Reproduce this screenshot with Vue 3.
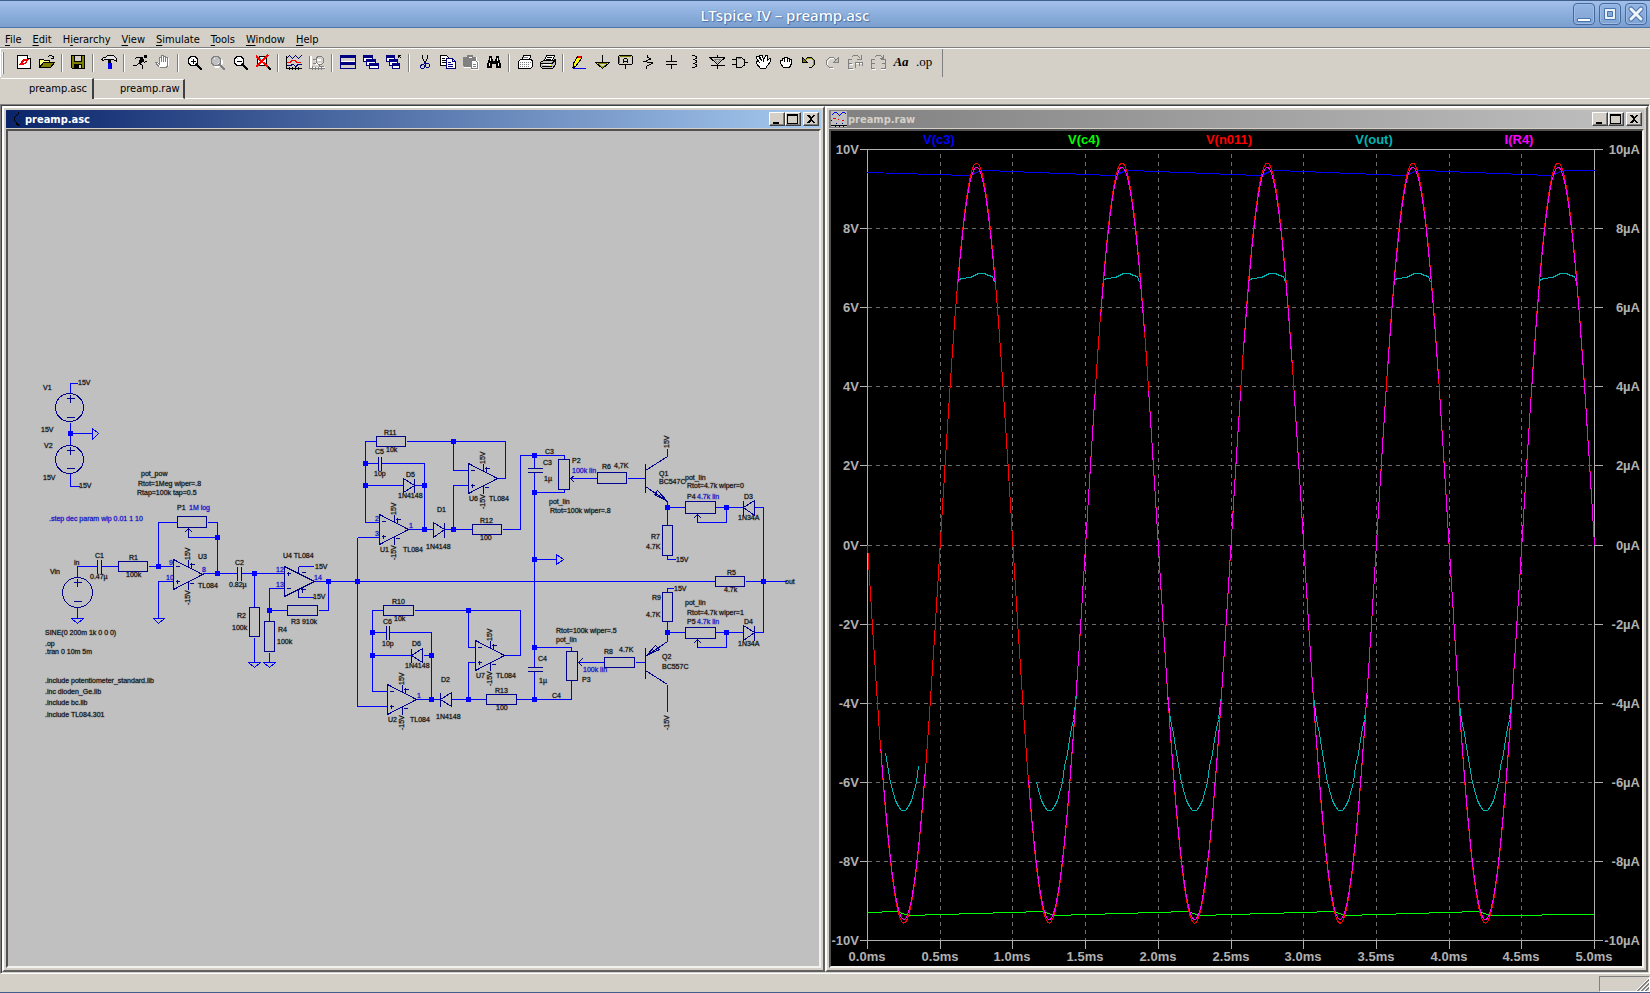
<script setup>
const menus = ['File', 'Edit', 'Hierarchy', 'View', 'Simulate', 'Tools', 'Window', 'Help']

const Z = 'M11 10L15 14V15H14L10 11Z'
const lens = 'M5 2.5H9L11.5 5V9L9 11.5H5L2.5 9V5Z'
const g = '#808080'
const w = '#ffffff'
const k = '#000000'
const n = '#000080'
// Each shape is [path, stroke, fill, stroke width]
const tools = [
  { name: 'New Schematic', s: [['M1.5 1.5H11.5L14.5 4.5V14.5H1.5Z', k, w], ['M11.5 1.5V4.5H14.5', k, w], ['M3 11L7 5H9L7 9H9L8 11Z', 'none', '#f00000'], ['M8 5H13L10 10H8L10 7H8Z', 'none', '#f00000']] },
  { name: 'Open', s: [['M.5 13.5V5.5H4.5L5.5 6.5H10.5V8.5', k, '#ffff80'], ['M.5 13.5L4.5 8.5H15.5L11.5 13.5Z', k, '#808000'], ['M8.5 3.5L10.5 1.5H12.5L14.5 3.5M14.5 1.5V4.5H11.5', k, 'none']] },
  null,
  { name: 'Save', s: [['M1.5 1.5H14.5V14.5H2.5L1.5 13.5Z', k, '#808000'], ['M4.5 1.5H11.5V7.5H4.5Z', k, '#d4d0c8'], ['M4 10H12V15H4Z', 'none', k], ['M9 11H11V14H9Z', 'none', '#d4d0c8']] },
  null,
  { name: 'Control Panel', s: [['M.5 5.5L2.5 3.5H4.5L6.5 1.5H12.5L15.5 4.5V7.5L12.5 5.5H3.5L2.5 6.5Z', k, '#e4e4e4'], ['M7 6H10V9H7Z', 'none', k], ['M7 9H10V15H7Z', 'none', '#0000ff'], ['M10.5 9V15', n, 'none']] },
  null,
  { name: 'Run', s: [['M12 1H15V4H12Z', 'none', k], ['M7 3H11L12 6L9 10H6L8 5Z', 'none', k], ['M7.500 3.500H4.500L2.500 5.500M10.500 6.500L12.500 8.500L15.500 6.500M7.500 9.500L10.500 11.500V14.500M6.500 9.500L4.500 11.500H.500', k, 'none']] },
  { name: 'Halt', s: [['M5 14L1 9V8H3L5 10V3H6V2H8V1H9V2H11V3H12V4H14V11L12 14Z', 'none', w], ['M4.500 13.500L.500 8.500H2.500L4.500 10.500V3.500H5.500M6.500 8V1.500H8.500V8M8.500 2.500H10.500V8M10.500 3.500H12.500V11.500L11.500 13.500H4.500', g, 'none']] },
  null,
  { name: 'Zoom in', s: [[lens, k, w], ['M4 5L6 3V5ZM8 10L10 8V10Z', 'none', '#00ffff'], ['M4.500 7H9.500M7 4.500V9.500', k, 'none'], [Z, k, k]] },
  { name: 'Pan', s: [['M6 3.500H10L12.500 6V10L10 12.500H6L3.500 10V6ZM12 12L16 16', w, 'none', 2], [lens, g, '#c0c0c0'], ['M4 5L6 3V5ZM8 10L10 8V10Z', 'none', w], [Z, g, g]] },
  { name: 'Zoom out', s: [[lens, k, w], ['M4 5L6 3V5ZM8 10L10 8V10Z', 'none', '#00ffff'], ['M4.500 7H9.500', k, 'none'], [Z, k, k]] },
  { name: 'Zoom full extents', s: [[lens, k, w], ['M4 5L6 3V5ZM8 10L10 8V10Z', 'none', '#00ffff'], [Z, k, k], ['M1 2L13 13M13 1L1 13', '#ff0000', 'none', 2]] },
  null,
  { name: 'Autorange', s: [['M.500 4.500L3.500 1.500L6.500 4.500L9.500 1.500L12.500 4.500L15.500 1.500', n, 'none'], ['M1 8.500H4L6 6.500H9L11 8.500H15', '#ff0000', 'none'], ['M1 11.500H4L7 10.500L10 12.500L12 10.500H16', n, 'none'], ['M.500 2V14.500H16M3.500 13V16M6.500 13V16M9.500 13V16M12.500 13V16', k, 'none']] },
  { name: 'Pick Visible Traces', s: [['M1.500 1.500V13.500H16M6 5.500H12M6 9.500H12', w, 'none', 2], ['M.500 1.500V14.500H16M3.500 12V16M6.500 13V16M9.500 13V16M12.500 13V16M4 5.500H7L8.500 3.500M4 9.500H7', g, 'none'], ['M8.500 2.500H12.500L14.500 4.500V8.500L12.500 10.500H9.500L7.500 8.500V3.500ZM10.500 10.500V12.500H15', g, 'none']] },
  null,
  { name: 'Tile', s: [['M.500 1.500H15.500V14.500H.500Z', n, w], ['M0 1H16V4H0ZM0 8H16V11H0Z', 'none', n], ['M1 5.500H15M1 12.500H15', '#d4d0c8', 'none', 3]] },
  { name: 'Cascade', s: [['M.500 1.500H9.500V7.500H.500Z', n, w], ['M0 1H10V4H0Z', 'none', n], ['M3.500 5.500H12.500V11.500H3.500Z', n, w], ['M3 5H13V8H3Z', 'none', n], ['M6.500 9.500H15.500V14.500H6.500Z', n, w], ['M6 9H16V12H6Z', 'none', n]] },
  { name: 'Close all', s: [['M.500 1.500H8.500V7.500H.500Z', n, w], ['M0 1H9V4H0Z', 'none', n], ['M3.500 5.500H11.500V11.500H3.500Z', n, w], ['M3 5H12V8H3Z', 'none', n], ['M6.500 9.500H13.500V14.500H6.500Z', n, w], ['M6 9H14V12H6Z', 'none', n], ['M12.500 4V1.500H15M12.500 1.500L15.500 4.500', k, 'none']] },
  null,
  { name: 'Cut', s: [['M5.500 1V4.500L8.500 9M10.500 1V4.500L7.500 9', k, 'none'], ['M5 10.500H6.500L7.500 12V13.500L6.500 14.500H4.500L3.500 13.500V12ZM9.500 9.500H11.500L12.500 11V12.500L11.500 13.500H9.500L8.500 12V11Z', n, 'none'], ['M7.500 8V10', n, 'none', 2]] },
  { name: 'Copy', s: [['M.500 1.500H6.500L9.500 4.500V11.500H.500Z', k, w], ['M2 4.500H5M2 6.500H7M2 8.500H7', k, 'none'], ['M6.500 4.500H12.500L15.500 7.500V14.500H6.500Z', n, w], ['M12.500 5V7.500H15M8 8.500H11M8 10.500H13M8 12.500H13', n, 'none']] },
  { name: 'Paste', s: [['M1 3H5V1H10V3H14V7H16V16H8V14H1Z', 'none', w], ['M0 3H4V1H10V3H13V6H8V13H1L0 12Z', 'none', g], ['M5.500 3.500H9', w, 'none'], ['M8.500 6.500H12.500L14.500 8.500V14.500H8.500ZM10 10.500H13M10 12.500H13', g, w]] },
  { name: 'Find', s: [['M3 2H6V5H7V7H9V5H10V2H13V5L15 10V14H10V10H6V14H1V10L3 5Z', 'none', k], ['M4.500 4V7M3.500 9V12M11.500 4V7M12.500 9V12', w, 'none']] },
  null,
  { name: 'Print preview', s: [['M4.500 6.500L6.500 1.500H13.500L12.500 6.500Z', k, w], ['M1.500 7.500L3.500 5.500H14.500L15.500 7.500V12.500L13.500 14.500H1.500Z', k, w], ['M3 8.500H14M3 10.500H13M3 12.500H13', g, 'none', 1, '1 1'], ['M6 3.500H11', g, 'none']] },
  { name: 'Print', s: [['M4.500 6.500L6.500 1.500H14.500L12.500 6.500Z', k, w], ['M.500 8.500L3.500 6.500H13.500L15.500 5.500V10.500L12.500 14.500H2.500L.500 12.500Z', k, '#c0c0c0'], ['M7 3.500H12M6 5.500H11M1 9.500H12L15 6.500M2 12.500H12', k, 'none'], ['M3 10.500H11', w, 'none'], ['M9 11.500H11', '#ffff00', 'none']] },
  null,
  { name: 'Wire', s: [['M2 14V10L7 2H10V5L5 12Z', k, '#ffff00'], ['M7 2H10V4H7Z', 'none', '#ff0000'], ['M1 13H4L2 15Z', 'none', k], ['M2 14.500H15', '#0000ff', 'none']] },
  { name: 'Ground', s: [['M8.500 1V8', k, 'none'], ['M1.500 8.500H15.500L8.500 14.500Z', k, 'none'], ['M4 9.500H13', '#808000', 'none'], ['M5.500 10.500L8.500 13L11.500 10.500', '#a0a000', 'none']] },
  { name: 'Label Net', s: [['M2.500 1.500H14.500L15.500 2.500V9.500L14.500 10.500H2.500L1.500 9.500V2.500Z', k, 'none'], ['M3 2.500H14M2.500 3V9', '#808000', 'none'], ['M6.500 9V5.500L7.500 4.500H9.500L10.500 5.500V9M7 7.500H10M8.500 11V15', k, 'none']] },
  { name: 'Resistor', s: [['M7.500 1V3L10.500 5L4.500 7.500L12.500 9L6.500 12.500V15', k, 'none']] },
  { name: 'Capacitor', s: [['M8.500 1V7M3 7.500H14M3 10.500H14M8.500 11V15', k, 'none']] },
  { name: 'Inductor', s: [['M5.500 1.500H8.500L10.500 3V4L8.500 5.500H6.500H8.500L10.500 7V8L8.500 9.500H6.500H8.500L10.500 11V12L8.500 13.500H5.500', k, 'none']] },
  { name: 'Diode', s: [['M8.500 1V3M8.500 11V15M1.500 11.500H15.500M1 3.500H16L8.500 10.500Z', k, 'none'], ['M5.500 5.500H11.500L8.500 8.500Z', g, 'none']] },
  { name: 'Component', s: [['M4.500 3.500H9.500L12.500 6V11L9.500 13.500H4.500ZM0 5.500H4M0 10.500H4M13 8.500H16', k, 'none'], ['M5.500 4.500H9', g, 'none']] },
  { name: 'Move', s: [['M5.500 14.500L1.500 9.500V7.500H3.500L4.500 8.500L1.500 4.500V2.500H3.500L6.500 6.500L4.500 2.500V1.500H7.500L8.500 6.500L10.500 1.500H12.500V6.500L14.500 4.500H15.500V7.500L12.500 11.500L10.500 14.500Z', k, w]] },
  { name: 'Drag', s: [['M5.500 13.500L2.500 9.500V6.500H4.500V4.500H6.500V3.500H9.500V4.500H11.500V5.500H13.500V9.500L11.500 13.500Z', k, w], ['M6.500 5V8M9.500 5V8M11.500 6V8', k, 'none']] },
  { name: 'Undo', s: [['M3.500 6.500L6.500 4.500H10.500L12.500 6.500V10.500L10.500 12.500', '#a0a000', 'none'], ['M4.500 5.500L6.500 3.500H10.500L13.500 6.500V10.500L10.500 13.500H8', k, 'none'], ['M1.500 3.500V8.500H6.500Z', k, '#808000']] },
  { name: 'Redo', s: [['M13 7.500L10.500 4.500H6.500L3.500 7.500V11.500L6.500 14.500H10', w, 'none'], ['M12 6.500L9.500 3.500H5.500L2.500 6.500V10.500L5.500 13.500H9', g, 'none'], ['M14.500 3.500V8.500H9.500Z', g, '#c0c0c0']] },
  { name: 'Rotate', s: [['M2 15.500H7M3 10.500H6M9 9.500H16', w, 'none'], ['M1.500 5V14.500H6M1.500 9.500H5M1.500 5.500H5', g, 'none', 1], ['M8.500 14V8.500H16M12.500 9V12M15.500 9V12', g, 'none', 1], ['M4.500 3.500L6.500 1.500H10.500L13.500 4.500M14.500 1V5.500H10', g, 'none']] },
  { name: 'Mirror', s: [['M2 15.500H6M11 15.500H17', w, 'none'], ['M1.500 5V14.500H5M1.500 9.500H5M1.500 5.500H5M15.500 5V14.500H11M15.500 9.500H12M15.500 5.500H11', g, 'none'], ['M4.500 3.500L6.500 1.500H10.500L13.500 4.500M13.500 1V4.500H10', g, 'none']] },
  { name: 'Text', text: 'Aa' },
  { name: 'SPICE Directive', text: '.op' },
]

// ---- schematic ----
const wires = [
  'M77 383H70V393M70 422V444M70 433H92M70 473V486H79',
  'M77 577V566H97M101 566H118M148 566H173M177 522H158V566M207 522H217V573M188 537H217',
  'M173 581H158V618M77 607V618M202 573H237M241 573H284M254 573V607M254 637V662M284 588H269V621M269 652V662',
  'M269 610H287M318 610H328V581M314 581H715M298 566H313M298 597H313',
  'M357 537V706M357 537H379M357 706H387',
  'M376 441H365V522H379M406 441H505V478H497M453 441V470H468M468 485H453V529',
  'M365 463H378M381 463H424V529M365 485H403M414 485H424M409 529H433M444 529H472M502 529H520V455H564V459',
  'M534 455V468M534 472V667M534 671V699M564 489V492H534M534 559H556M534 647H571V651M571 680V699H516M486 699H451',
  'M383 610H372V691H387M414 610H520V655H505M468 610V647H475M475 662H468V699',
  'M372 632H386M389 632H431V699M372 655H412M423 655H431M417 699H440',
  'M570 478H597M627 478H645M667 456V448M667 501V525M667 555V559H675M667 507H685M715 507H743M726 507V522H697M754 507H763V632H754M763 581H786M745 581H763',
  'M577 662H604M635 662H645M667 684V711M667 641V621M667 592V588H673M667 632H685M715 632H743M726 632V647H697',
].join('')

const nodes = [[70, 433], [158, 566], [217, 537], [217, 573], [254, 573], [269, 610], [328, 581], [357, 581], [365, 463], [365, 485], [424, 485], [424, 529], [453, 441], [453, 529], [534, 455], [534, 492], [534, 559], [534, 647], [534, 699], [372, 632], [372, 655], [431, 655], [431, 699], [468, 610], [468, 699], [667, 507], [726, 507], [763, 581], [667, 632], [726, 632]]

// Resistor and potentiometer bodies: x, y, width, height
const boxes = [[177, 516, 29, 11], [118, 561, 29, 10], [249, 607, 10, 29], [264, 621, 10, 30], [287, 605, 30, 10], [376, 436, 29, 10], [472, 524, 29, 10], [558, 459, 11, 30], [597, 472, 29, 11], [662, 525, 10, 30], [685, 501, 30, 12], [715, 576, 29, 10], [662, 592, 10, 29], [685, 627, 30, 11], [604, 657, 30, 10], [566, 651, 11, 29], [486, 694, 30, 10], [383, 605, 30, 10]]

const sources = [[69, 407, 14], [69, 459, 14], [77, 592, 15]]
const plusAt = (x, y) => `M${x - 4} ${y}H${x + 4}M${x} ${y - 4}V${y + 4}`
const minusAt = (x, y) => `M${x - 4} ${y}H${x + 4}`
const sourceMarks = [plusAt(70, 398), minusAt(70, 417), plusAt(70, 450), minusAt(70, 468), plusAt(77, 582), minusAt(77, 601)].join('')

const opamps = [[173, 559], [379, 514], [468, 463], [475, 640], [387, 684]]
const opampPath = ([x, y]) =>
  `M${x} ${y}V${y + 30}L${x + 29} ${y + 15}ZM${x + 15} ${y}V${y + 8}M${x + 15} ${y + 22}V${y + 30}` +
  `M${x + 2} ${y + 7}H${x + 6}M${x + 2} ${y + 22}H${x + 6}M${x + 4} ${y + 20}V${y + 24}` +
  `M${x + 16} ${y + 5}H${x + 21}M${x + 18} ${y + 3}V${y + 8}M${x + 16} ${y + 24}H${x + 20}`
const supplies = opamps.flatMap(([x, y]) => [[x + 17, y + 1, '15V'], [x + 17, y + 46, '-15V']])
supplies.push([669, 448, '15V'], [669, 730, '-15V'])

const symbols = [
  // U4
  'M284 566V596L314 581ZM298 566V573M298 589V597M286 573H290M288 571V575M286 588H290M301 572H305M300 589H305M302 587V592',
  // capacitors
  'M97 559V573M101 559V573M237 566V580M241 566V580M378 456V470M381 456V470M386 625V639M389 625V639M527 468H542M527 472H542M527 667H542M527 671H542',
  // diodes
  'M403 478V492L414 485ZM414 478V492M433 522V537L444 529ZM444 522V537M422 648V662L411 655ZM411 648V662M451 692V706L440 699ZM440 692V706M754 500V515L743 507ZM743 500V515M743 625V640L754 632ZM754 625V640',
  // transistors
  'M645 463V492M645 470L667 456M645 486L667 501M654 494L657 490L667 501ZM645 647V678M645 656L667 641M645 670L667 684M646 655L655 645L659 649Z',
  // wipers
  'M184 532L188 528L192 532M188 528V537M574 475L570 478L574 482M582 658L578 662L582 666M693 518L697 514L701 518M697 514V522M693 643L697 639L701 643M697 639V647',
].join('')

const grounds = 'M92 428V439L98 433ZM556 554V564L563 559ZM153 618H164L158 623ZM71 618H83L77 623ZM248 662H260L254 667ZM263 662H275L269 667Z'

const labels = [
  [43, 390, 'V1'], [78, 385, '15V'], [41, 432, '15V'], [44, 448, 'V2'], [43, 480, '15V'], [79, 488, '15V'],
  [141, 476, 'pot_pow'], [138, 486, 'Rtot=1Meg wiper=.8'], [137, 495, 'Rtap=100k tap=0.5'], [177, 510, 'P1'],
  [95, 558, 'C1'], [90, 579, '0.47µ'], [129, 560, 'R1'], [126, 577, '100k'], [74, 565, 'in'], [50, 574, 'Vin'],
  [198, 559, 'U3'], [198, 588, 'TL084'], [235, 565, 'C2'], [229, 587, '0.82µ'], [237, 618, 'R2'], [232, 630, '100k'],
  [278, 632, 'R4'], [277, 644, '100k'], [291, 624, 'R3 910k'], [283, 558, 'U4 TL084'], [315, 569, '15V'], [313, 599, '15V'],
  [45, 635, 'SINE(0 200m 1k 0 0 0)'], [45, 646, '.op'], [45, 654, '.tran 0 10m 5m'], [45, 683, '.include potentiometer_standard.lib'],
  [45, 694, '.inc dioden_Ge.lib'], [45, 705, '.include bc.lib'], [45, 717, '.include TL084.301'],
  [384, 435, 'R11'], [386, 452, '10k'], [375, 454, 'C5'], [374, 476, '10p'], [406, 477, 'D5'], [398, 498, '1N4148'],
  [380, 552, 'U1'], [403, 552, 'TL084'], [426, 549, '1N4148'], [437, 512, 'D1'], [480, 523, 'R12'], [480, 540, '100'],
  [469, 501, 'U6'], [489, 501, 'TL084'], [545, 454, 'C3'], [543, 465, 'C3'], [544, 481, '1µ'], [572, 463, 'P2'],
  [549, 504, 'pot_lin'], [550, 513, 'Rtot=100k wiper=.8'], [392, 604, 'R10'], [394, 621, '10k'], [383, 624, 'C6'], [382, 646, '10p'],
  [412, 646, 'D6'], [405, 668, '1N4148'], [441, 682, 'D2'], [436, 719, '1N4148'], [388, 722, 'U2'], [410, 722, 'TL084'],
  [476, 678, 'U7'], [496, 678, 'TL084'], [495, 693, 'R13'], [496, 710, '100'], [538, 661, 'C4'], [539, 683, '1µ'], [552, 698, 'C4'],
  [556, 633, 'Rtot=100k wiper=.5'], [556, 642, 'pot_lin'], [582, 682, 'P3'], [602, 469, 'R6'], [614, 468, '4,7K'],
  [659, 476, 'Q1'], [659, 484, 'BC547C'], [685, 480, 'pot_lin'], [687, 488, 'Rtot=4.7k wiper=0'], [687, 499, 'P4'], [744, 499, 'D3'],
  [738, 520, '1N34A'], [651, 539, 'R7'], [646, 549, '4.7K'], [676, 562, '15V'], [727, 575, 'R5'], [724, 592, '4.7k'], [785, 584, 'out'],
  [652, 600, 'R9'], [646, 617, '4.7K'], [674, 591, '15V'], [685, 605, 'pot_lin'], [687, 615, 'Rtot=4.7k wiper=1'], [687, 624, 'P5'],
  [744, 624, 'D4'], [738, 646, '1N34A'], [662, 659, 'Q2'], [662, 669, 'BC557C'], [604, 654, 'R8'], [619, 652, '4.7K'],
]
const blueLabels = [
  [189, 510, '1M log'], [49, 521, '.step dec param wip 0.01 1 10'], [169, 565, '9'], [166, 580, '10'], [202, 572, '8'],
  [276, 572, '12'], [276, 587, '13'], [314, 580, '14'], [375, 521, '2'], [375, 536, '3'], [409, 528, '1'], [417, 698, '1'],
  [572, 473, '100k lin'], [583, 672, '100k lin'], [697, 499, '4.7k lin'], [697, 624, '4.7k lin'],
]

// ---- waveform plot ----
const left = 867
const right = 1594
const top = 149
const bottom = 940
const perMs = (right - left) / 5
const px = (t) => left + t * perMs
const py = (v) => (top + bottom) / 2 - (v * (bottom - top)) / 20

const rows = Array.from({ length: 11 }, (_, i) => ({ y: Math.round(py(10 - 2 * i)), v: 10 - 2 * i }))
const cols = Array.from({ length: 11 }, (_, i) => ({ x: Math.round(px(i / 2)), t: (i / 2).toFixed(1) }))
const gridLines =
  rows.slice(1, -1).map((r) => `M${left} ${r.y}H${right}`).join('') +
  cols.slice(1, -1).map((c) => `M${c.x} ${top + 4}V${bottom}`).join('')
const axes =
  `M${left} ${top}V${bottom + 8}M${right} ${top}V${bottom + 8}M${left} ${top}H${right}M${left} ${bottom}H${right}` +
  rows.map((r) => `M${left - 8} ${r.y}H${left}M${right} ${r.y}H${right + 8}`).join('') +
  cols.map((c) => `M${c.x} ${bottom}V${bottom + 8}`).join('')

const sine = (from, to, hi, lo) => {
  const pts = []
  const steps = Math.max(2, Math.round((to - from) * 150))
  for (let i = 0; i <= steps; i++) {
    const t = from + ((to - from) * i) / steps
    const s = -Math.sin(2 * Math.PI * t)
    pts.push(`${px(t).toFixed(1)} ${py(s > 0 ? s * hi : s * lo).toFixed(1)}`)
  }
  return 'M' + pts.join('L')
}
const redTrace = sine(0, 5, 9.66, 9.56)
// Time at which the curve reaches v, measured from the peak or trough
const half = (v) => Math.acos(Math.abs(v) / 9.57) / (2 * Math.PI)
const spans = [
  [0.25 - half(5.2), 0.25 + half(5.6)],
  [0.75 - half(6.6), 0.75 + half(6.6)],
  [1.25 - half(6), 1.75 - half(3.9)],
  [1.75 - half(5.8), 1.75 + half(5.4)],
  [1.75 + half(3.9), 2.75 - half(3.9)],
  [2.75 - half(4.9), 2.75 + half(4.6)],
  [2.75 + half(3.9), 3.75 - half(3.9)],
  [3.75 - half(4.3), 3.75 + half(4.2)],
  [3.75 + half(3.9), 5],
]
const magentaTrace = spans.map(([a, b]) => sine(a, b, 9.55, 9.47)).join('')

const peaks = [0.75, 1.75, 2.75, 3.75, 4.75].map((t) => Math.round(px(t)))
const troughs = [0.25, 1.25, 2.25, 3.25, 4.25].map((t) => Math.round(px(t)))
const crown = [[-18, 280], [-18, 279], [-14, 278], [-6, 277], [-2, 275], [2, 273], [8, 273], [12, 275], [16, 276], [18, 282]]
const bowl = [[-27, 695], [-24, 719], [-21, 733], [-18, 753], [-13, 782], [-8, 800], [-5, 806], [-2, 810], [2, 810], [5, 806], [8, 800], [13, 782], [15, 766], [18, 753], [21, 733], [24, 719], [27, 695]]
const line = (pts) => 'M' + pts.map((p) => p.join(' ')).join('L')
const cyanTrace =
  peaks.map((c) => line(crown.map(([x, y]) => [c + x, y]))).join('') +
  troughs
    .map((c, i) => {
      const pts = i === 0 ? bowl.slice(3, 13) : i === 1 ? bowl.slice(4) : bowl
      return line(pts.map(([x, y]) => [c + x, y]))
    })
    .join('')

const blueTrace = line([[left, 172], ...peaks.flatMap((c) => [[c - 9, 175], [c - 4, 174], [c + 2, 171], [c + 9, 170]]), [right, 170]])
const greenTrace = line([[left, 912], ...troughs.flatMap((c) => [[c - 6, 911], [c - 1, 913], [c + 5, 915]]), [right, 914]])

const legend = [
  { t: 'V(c3)', x: 939, c: '#0000ff' },
  { t: 'V(c4)', x: 1084, c: '#00ff00' },
  { t: 'V(n011)', x: 1229, c: '#ff0000' },
  { t: 'V(out)', x: 1374, c: '#00b4b4' },
  { t: 'I(R4)', x: 1519, c: '#ff00ff' },
]
</script>

<template>
  <div class="app">
    <header class="frame-title">
      <h1>LTspice IV – preamp.asc</h1>
      <div class="frame-buttons">
        <button aria-label="Minimize"><svg viewBox="0 0 20 20"><path d="M3.500 14.500H16.500V17.500H3.500Z" fill="#fff" stroke="#4a74ac" /></svg></button>
        <button aria-label="Maximize"><svg viewBox="0 0 20 20"><path d="M4.500 4.500H15.500V15.500H4.500Z" fill="#e8f0fa" stroke="#4a74ac" /><path d="M7.500 7.500H12.500V12.500H7.500Z" fill="#86a9d8" stroke="#4a74ac" /></svg></button>
        <button aria-label="Close"><svg viewBox="0 0 20 20"><path d="M5 5L15 15M15 5L5 15" stroke="#4a74ac" stroke-width="5" stroke-linecap="round" /><path d="M5 5L15 15M15 5L5 15" stroke="#f0f5fc" stroke-width="3" stroke-linecap="round" /></svg></button>
      </div>
    </header>

    <nav class="menubar">
      <button v-for="m in menus" :key="m"><template v-if="m === 'Hierarchy'">H<u>i</u>erarchy</template><template v-else><u>{{ m[0] }}</u>{{ m.slice(1) }}</template></button>
    </nav>

    <div class="toolbar" role="toolbar">
      <span class="grip"></span>
      <template v-for="(t, i) in tools" :key="i">
        <span v-if="!t" class="sep"></span>
        <button v-else :aria-label="t.name">
          <svg v-if="t.s" viewBox="0 0 16 16">
            <path v-for="(p, j) in t.s" :key="j" :d="p[0]" :stroke="p[1]" :fill="p[2]" :stroke-width="p[3] || 1" :stroke-dasharray="p[4]" />
          </svg>
          <span v-else :class="['glyph', t.text === 'Aa' ? 'italic' : 'plain']">{{ t.text }}</span>
        </button>
      </template>
      <span class="toolbar-end"></span>
    </div>

    <div class="tabs" role="tablist">
      <button role="tab" aria-selected="true" class="tab active">preamp.asc</button>
      <button role="tab" aria-selected="false" class="tab">preamp.raw</button>
    </div>

    <main class="mdi">
      <section class="child">
        <header class="caption active">
          <svg class="doc" viewBox="0 0 16 16"><path d="M10.500 1V2.500L6.500 6.500V9.500L8.500 11.500M8.500 11V14M9 12.500L11.500 15" fill="none" stroke="#000" /></svg>
          <h2>preamp.asc</h2>
          <button aria-label="Minimize"><svg viewBox="0 0 12 10"><path d="M2 8H8V10H2Z" /></svg></button>
          <button aria-label="Maximize"><svg viewBox="0 0 12 10"><path d="M0 0H11V10H0ZM1 2V9H10V2Z" fill-rule="evenodd" /></svg></button>
          <button class="close" aria-label="Close"><svg viewBox="0 0 12 10"><path d="M2 1H4L6 3L8 1H10L7 5L10 9H8L6 7L4 9H2L5 5Z" /></svg></button>
        </header>
        <div class="client sheet">
          <svg viewBox="8 131 811 835" class="canvas">
            <g fill="none" shape-rendering="crispEdges" transform="translate(0.5 0.5)">
              <path :d="wires" stroke="#0000ff" />
              <path :d="grounds" stroke="#0000ff" />
              <path :d="symbols + sourceMarks" stroke="#000090" />
              <path v-for="(o, i) in opamps" :key="i" :d="opampPath(o)" stroke="#000090" />
              <circle v-for="(s, i) in sources" :key="i" :cx="s[0]" :cy="s[1]" :r="s[2]" stroke="#000090" />
              <rect v-for="(b, i) in boxes" :key="i" :x="b[0]" :y="b[1]" :width="b[2]" :height="b[3]" stroke="#000090" fill="#c0c0c0" />
            </g>
            <g fill="#0000ff" shape-rendering="crispEdges">
              <rect v-for="(p, i) in nodes" :key="i" :x="p[0] - 2" :y="p[1] - 2" width="5" height="5" />
            </g>
            <g class="net">
              <text v-for="(l, i) in labels" :key="i" :x="l[0]" :y="l[1]">{{ l[2] }}</text>
              <text v-for="(l, i) in supplies" :key="i" :transform="`translate(${l[0]} ${l[1]}) rotate(-90)`">{{ l[2] }}</text>
            </g>
            <g class="net blue">
              <text v-for="(l, i) in blueLabels" :key="i" :x="l[0]" :y="l[1]">{{ l[2] }}</text>
            </g>
          </svg>
        </div>
      </section>

      <section class="child">
        <header class="caption">
          <svg class="doc" viewBox="0 0 16 16"><path d="M0 0H16V16H0Z" fill="#c0c0c0" /><path d="M.500 4.500L3.500 1.500H5.500L8.500 4.500L11.500 1.500H13.500L15.500 3.500" fill="none" stroke="#0000ff" /><path d="M2 7.500H5M7 8.500H8M11 9.500H13" stroke="#ff0000" /><path d="M5 12.500H6M11 12.500H12" stroke="#000080" /><path d="M0 14.500H16M.500 9V10M4.500 15V16M8.500 15V16M12.500 15V16" stroke="#000" /></svg>
          <h2>preamp.raw</h2>
          <button aria-label="Minimize"><svg viewBox="0 0 12 10"><path d="M2 8H8V10H2Z" /></svg></button>
          <button aria-label="Maximize"><svg viewBox="0 0 12 10"><path d="M0 0H11V10H0ZM1 2V9H10V2Z" fill-rule="evenodd" /></svg></button>
          <button class="close" aria-label="Close"><svg viewBox="0 0 12 10"><path d="M2 1H4L6 3L8 1H10L7 5L10 9H8L6 7L4 9H2L5 5Z" /></svg></button>
        </header>
        <div class="client plot">
          <svg viewBox="831 131 811 835" class="canvas">
            <g fill="none" shape-rendering="crispEdges" transform="translate(0.5 0.5)">
              <path :d="gridLines" stroke="#6c6c6c" stroke-dasharray="4 4" />
              <path :d="axes" stroke="#b0b0b0" />
              <path :d="blueTrace" stroke="#0000ff" />
              <path :d="greenTrace" stroke="#00ff00" />
              <path :d="redTrace" stroke="#ff0000" />
              <path :d="cyanTrace" stroke="#00b4b4" />
              <path :d="magentaTrace" stroke="#ff00ff" />
            </g>
            <g class="axis">
              <text v-for="r in rows" :key="r.v" x="859" :y="r.y + 5" text-anchor="end">{{ r.v }}V</text>
              <text v-for="r in rows" :key="'r' + r.v" x="1640" :y="r.y + 5" text-anchor="end">{{ r.v }}µA</text>
              <text v-for="c in cols" :key="c.t" :x="c.x" y="961" text-anchor="middle">{{ c.t }}ms</text>
              <text v-for="l in legend" :key="l.t" :x="l.x" y="144" text-anchor="middle" :fill="l.c">{{ l.t }}</text>
            </g>
          </svg>
        </div>
      </section>
    </main>

    <footer class="status">
      <span class="cell">
        <svg viewBox="0 0 14 14"><path d="M1 14L14 1M5 14L14 5M9 14L14 9" stroke="#fff" /><path d="M2 14L14 2M3 14L14 3M6 14L14 6M7 14L14 7M10 14L14 10M11 14L14 11" stroke="#808080" /></svg>
      </span>
    </footer>
  </div>
</template>

<style>
body {
  background: #d4d0c8;
}
</style>

<style scoped>
.app {
  display: flex;
  flex-direction: column;
  height: 100vh;
  box-sizing: border-box;
  border-bottom: 1px solid #3f5f8c;
  background: #d4d0c8;
  color: #000;
  font: 11px "DejaVu Sans Condensed", "DejaVu Sans", sans-serif;
}
button {
  margin: 0;
  padding: 0;
  border: 0;
  background: none;
  color: inherit;
  font: inherit;
}
h1,
h2 {
  margin: 0;
}
.frame-title {
  flex: none;
  position: relative;
  height: 28px;
  box-sizing: border-box;
  border-top: 1px solid #3f5f8c;
  border-bottom: 1px solid #4a74ac;
  background: linear-gradient(#a3c0ea, #8cafdd 50%, #7a9fce);
}
h1 {
  padding: 1px 80px 0 0;
  color: #fff;
  font: 500 15px/26px "Noto Sans", sans-serif;
  text-align: center;
  text-shadow: 0 0 1px #3f66a0, 1px 1px 1px #4a70a8;
}
.frame-buttons {
  position: absolute;
  right: 3px;
  top: 2px;
  display: flex;
  gap: 4px;
}
.frame-buttons button {
  width: 22px;
  height: 22px;
  border: 1px solid #44699e;
  border-radius: 4px;
  background: linear-gradient(#94b5e2, #7ea3d3);
  box-shadow: inset 0 0 0 1px #9dbce8;
}
.frame-buttons svg {
  display: block;
  width: 20px;
  height: 20px;
}
.menubar {
  flex: none;
  display: flex;
  height: 20px;
  box-sizing: border-box;
  border-bottom: 1px solid #808080;
}
.menubar button {
  height: 19px;
  padding: 4px 5px 0 6px;
  line-height: 15px;
}
.menubar button:first-child {
  padding-left: 5px;
}
u {
  text-underline-offset: 2px;
}
.toolbar {
  flex: none;
  display: flex;
  height: 29px;
  box-sizing: border-box;
  border-top: 1px solid #fff;
  border-left: 1px solid #fff;
}
.grip {
  width: 2px;
  height: 22px;
  margin: 3px 8px 0 1px;
  border-right: 1px solid #808080;
  border-left: 1px solid #fff;
  box-sizing: border-box;
  flex: none;
}
.toolbar button {
  flex: none;
  width: 23px;
  height: 26px;
  padding: 5px 3px 5px 4px;
}
.toolbar svg {
  display: block;
  width: 16px;
  height: 16px;
  shape-rendering: crispEdges;
}
.sep {
  flex: none;
  width: 2px;
  height: 18px;
  margin: 5px 3px 0;
  border-left: 1px solid #808080;
  border-right: 1px solid #fff;
  box-sizing: border-box;
}
.glyph {
  display: block;
  white-space: nowrap;
}
.italic {
  font: italic bold 13px/16px "Liberation Serif", serif;
}
.plain {
  font: 13px/16px "Liberation Serif", serif;
}
.toolbar-end {
  width: 7px;
  border-right: 1px solid #808080;
}
.tabs {
  flex: none;
  display: flex;
  align-items: flex-end;
  height: 27px;
  box-sizing: border-box;
  padding: 0 0 5px 1px;
  background: linear-gradient(#fff, #fff) 93px 21px / 100% 1px no-repeat;
}
.tab {
  height: 20px;
  padding: 0 3px 0 26px;
  border-top: 1px solid #fff;
  border-right: 2px solid #404040;
  line-height: 18px;
}
.tab.active {
  height: 21px;
  padding: 0 5px 0 28px;
}
.tab:not(.active) {
  border-bottom: 1px solid #fff;
}
.mdi {
  flex: 1;
  min-height: 0;
  display: grid;
  grid-template-columns: 1fr 1fr;
  border: 1px solid;
  border-color: #808080 #fff #fff #808080;
  box-shadow: inset 1px 1px #404040;
  padding: 1px;
}
.child {
  display: flex;
  flex-direction: column;
  min-width: 0;
  min-height: 0;
  box-sizing: border-box;
  padding: 2px;
  border: 2px solid;
  border-color: #fff #606060 #606060 #fff;
}
.caption {
  flex: none;
  display: flex;
  align-items: center;
  height: 18px;
  padding: 0 2px;
  margin-bottom: 1px;
  box-sizing: border-box;
  background: linear-gradient(90deg, #808080, #c0c0c0);
  color: #d4d0c8;
}
.caption.active {
  background: linear-gradient(90deg, #0a246a, #a6caf0);
  color: #fff;
}
.caption h2 {
  flex: 1;
  padding: 2px 0 0 1px;
  font-size: 11px;
  font-weight: bold;
  line-height: 16px;
}
.doc {
  width: 16px;
  height: 16px;
  shape-rendering: crispEdges;
}
.caption button {
  width: 16px;
  height: 14px;
  padding: 1px;
  border: 1px solid;
  border-color: #fff #404040 #404040 #fff;
  background: #d4d0c8;
  box-shadow: inset -1px -1px #808080;
}
.caption .close {
  margin-left: 2px;
}
.caption button svg {
  display: block;
  width: 12px;
  height: 10px;
  fill: #000;
  shape-rendering: crispEdges;
}
.client {
  flex: 1;
  min-height: 0;
  border: 2px solid;
  border-color: #505050 #f4f2ee #f4f2ee #505050;
}
.sheet {
  background: #c0c0c0;
}
.plot {
  background: #000;
}
.canvas {
  display: block;
  width: 100%;
  height: 100%;
}
.net {
  font: 7px "Liberation Sans", Arial, sans-serif;
  fill: #000;
  stroke: #000;
  stroke-opacity: 0.25;
}
.blue {
  fill: #0000c8;
  stroke: #0000c8;
}
.axis {
  font: bold 13px "Liberation Sans", Arial, sans-serif;
  fill: #b0b0b0;
}
.status {
  flex: none;
  display: flex;
  justify-content: flex-end;
  height: 18px;
  padding-top: 2px;
  box-sizing: border-box;
}
.cell {
  display: flex;
  align-items: flex-end;
  justify-content: flex-end;
  width: 51px;
  box-sizing: border-box;
  border: 1px solid;
  border-color: #808080 #fff #fff #808080;
}
.cell svg {
  width: 14px;
  height: 14px;
}
</style>
